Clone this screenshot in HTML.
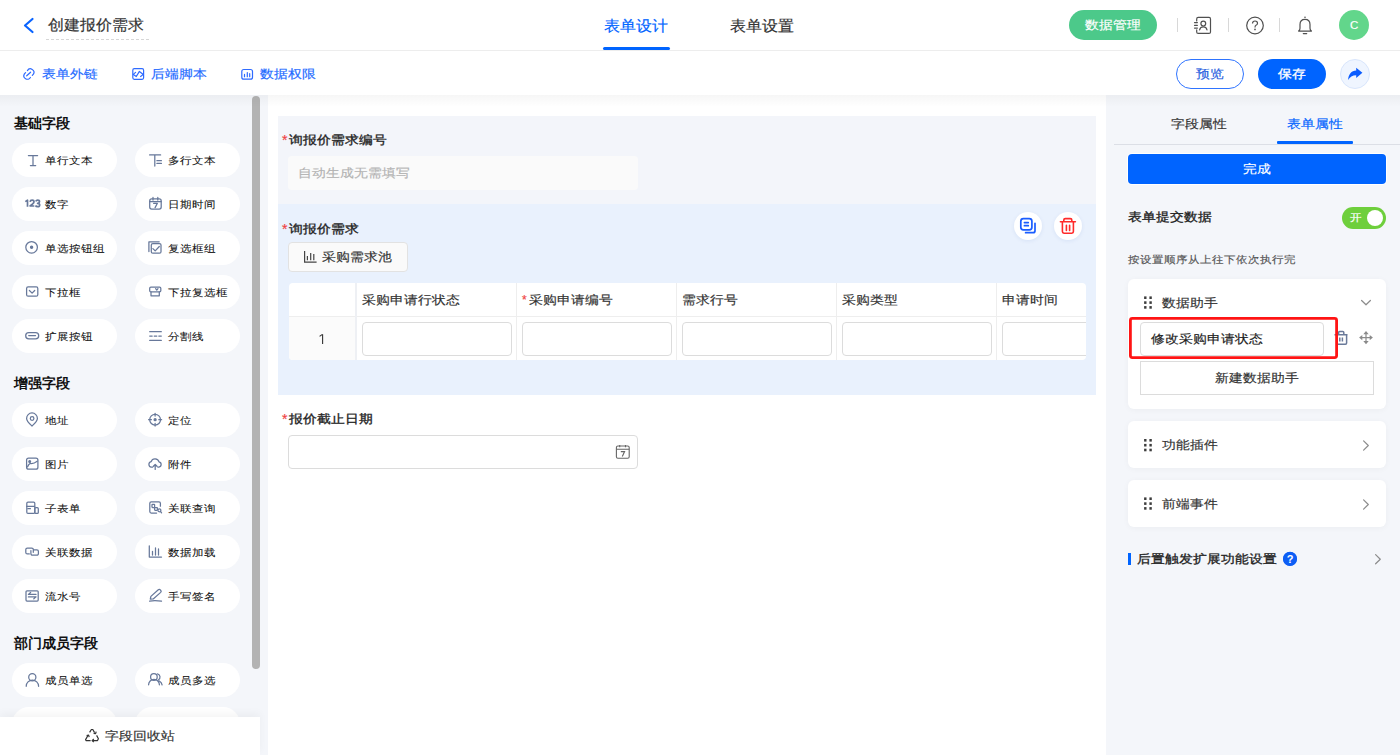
<!DOCTYPE html>
<html><head><meta charset="utf-8">
<style>
*{box-sizing:border-box;margin:0;padding:0}
html,body{width:1400px;height:755px;overflow:hidden;background:#fff;font-family:"Liberation Sans",sans-serif;color:#333}
.a{position:absolute}
.t{position:absolute;white-space:nowrap;line-height:16px;transform:scaleY(.87)}
.n{transform:none}
.t:not(.b){-webkit-text-stroke:0.18px currentColor}
.l{transform:scaleY(.94)}
svg{position:absolute;overflow:visible}
/* header */
#hdr{position:absolute;left:0;top:0;width:1400px;height:51px;border-bottom:1px solid #ededed;background:#fff}
#tb{position:absolute;left:0;top:51px;width:1400px;height:44px;background:#fff}
/* left panel */
#lp{position:absolute;left:0;top:95px;width:268px;height:660px;background:#f4f6fa;overflow:hidden}
.sec{position:absolute;left:14px;font-size:14px;font-weight:bold;color:#111;line-height:16px}
.pill{position:absolute;width:105px;height:34px;border-radius:17px;background:#fff}
.pill .t{font-size:12px;color:#111;left:33px;top:10px;-webkit-text-stroke:0.08px currentColor}
.pill svg{left:12px;top:10px}
#scroll{position:absolute;left:252px;top:96px;width:8px;height:573px;border-radius:4px;background:#b3b3b3}
#bin{position:absolute;left:0;top:717px;width:260px;height:38px;background:#fff;box-shadow:0 -4px 8px rgba(0,0,0,0.04)}
/* canvas */
#cv{position:absolute;left:268px;top:95px;width:838px;height:660px;background:#fff}
/* right panel */
#rp{position:absolute;left:1106px;top:95px;width:294px;height:660px;background:#f4f6fa}
.card{position:absolute;left:1128px;width:258px;background:#fff;border-radius:6px;box-shadow:0 1px 6px rgba(0,0,0,0.04)}
.blue{color:#0064ff}
.b{font-weight:normal !important;-webkit-text-stroke:0.35px currentColor}
</style></head>
<body>
<!-- HEADER -->
<div id="hdr"></div>
<svg style="left:0;top:0" width="1" height="1"><path d="M32.5 19 L25 25.5 L32.5 32" fill="none" stroke="#0a64ff" stroke-width="2.2" stroke-linecap="round" stroke-linejoin="round"/></svg>
<div class="t l" style="left:48px;top:17px;font-size:16px;color:#333">创建报价需求</div>
<div class="a" style="left:46px;top:39px;width:104px;height:1px;background-image:linear-gradient(90deg,#d6d6d6 60%,transparent 60%);background-size:5px 1px"></div>

<div class="t l blue" style="left:604px;top:18px;font-size:16px">表单设计</div>
<div class="a" style="left:603px;top:47px;width:67px;height:3px;border-radius:2px;background:#0064ff"></div>
<div class="t l" style="left:730px;top:18px;font-size:16px;color:#333">表单设置</div>

<div class="a" style="left:1069px;top:10px;width:88px;height:30px;border-radius:15px;background:#4cc98a"></div>
<div class="t" style="left:1085px;top:17px;font-size:14px;color:#fff">数据管理</div>
<div class="a" style="left:1177px;top:18px;width:1px;height:14px;background:#d8d8d8"></div>
<div class="a" style="left:1228px;top:18px;width:1px;height:14px;background:#d8d8d8"></div>
<div class="a" style="left:1279px;top:18px;width:1px;height:14px;background:#d8d8d8"></div>
<!-- contacts icon -->
<svg style="left:0;top:0" width="1" height="1"><g fill="none" stroke="#505050" stroke-width="1.2" stroke-linecap="round">
<path d="M1196.7 21V18.9A1.5 1.5 0 0 1 1198.2 17.4H1209A1.5 1.5 0 0 1 1210.5 18.9V31.9A1.5 1.5 0 0 1 1209 33.4H1198.2A1.5 1.5 0 0 1 1196.7 31.9V29.9"/>
<path d="M1194.5 22.6H1197.4M1194.5 25.3H1197.4M1194.5 28.1H1197.4"/>
<circle cx="1203.3" cy="23.6" r="2.4"/><path d="M1199.6 29.8A3.8 3.8 0 0 1 1207 29.8"/></g></svg>
<!-- help icon -->
<svg style="left:0;top:0" width="1" height="1"><circle cx="1255" cy="25.5" r="8.3" fill="none" stroke="#505050" stroke-width="1.2"/>
<path d="M1252.5 23.4Q1252.6 21 1255 21Q1257.5 21 1257.5 23.2Q1257.5 24.6 1256 25.3Q1255 25.8 1255 27.4" fill="none" stroke="#505050" stroke-width="1.2"/><circle cx="1255" cy="29.4" r="0.85" fill="#505050"/></svg>
<!-- bell -->
<svg style="left:0;top:0" width="1" height="1"><g fill="none" stroke="#505050" stroke-width="1.2" stroke-linejoin="round">
<path d="M1298.6 31.1Q1300 30.2 1300 28.3V24.6Q1300 19.4 1305 19.4Q1310 19.4 1310 24.6V28.3Q1310 30.2 1311.4 31.1Z"/><path d="M1303.3 33.6H1306.7" stroke-linecap="round"/></g><circle cx="1305" cy="17.3" r="0.8" fill="#505050"/></svg>
<div class="a" style="left:1339px;top:10px;width:30px;height:30px;border-radius:50%;background:#62d68b"></div>
<div class="t n" style="left:1350px;top:17px;font-size:11.5px;color:#fff">C</div>

<!-- TOOLBAR -->
<div id="tb"></div>
<svg style="left:0;top:0" width="1" height="1"><g fill="none" stroke="#2f6bff" stroke-width="1.2" stroke-linecap="round">
<path d="M27.4 70.6A3.3 3.3 0 0 1 33.4 74.2L32.3 75.4M25.6 72.6L24.4 73.9A3.3 3.3 0 0 0 30.4 77.5M26.7 75.8L30.6 72.2"/></g></svg>
<div class="t blue" style="left:42px;top:66px;font-size:14px;color:#1e6bff">表单外链</div>
<svg style="left:0;top:0" width="1" height="1"><g fill="none" stroke="#2f6bff" stroke-width="1.2" stroke-linejoin="round" stroke-linecap="round">
<rect x="132.8" y="68.7" width="10.8" height="10.6" rx="1.5"/><path d="M135.6 72.4L133.3 74.4L136.3 76.5L139.4 71.4L143.3 74.4L140.6 76.5"/></g></svg>
<div class="t blue" style="left:151px;top:66px;font-size:14px;color:#1e6bff">后端脚本</div>
<svg style="left:0;top:0" width="1" height="1"><g fill="none" stroke="#2f6bff" stroke-width="1.2" stroke-linecap="round">
<rect x="241.8" y="69.5" width="10.7" height="9.7" rx="2"/><path d="M244.5 74.4V76.7M247.3 72.5V76.7M249.7 73.7V76.7"/></g></svg>
<div class="t blue" style="left:260px;top:66px;font-size:14px;color:#1e6bff">数据权限</div>

<div class="a" style="left:1176px;top:59px;width:68px;height:30px;border-radius:15px;border:1px solid #2f74ff;background:#fff"></div>
<div class="t" style="left:1196px;top:66px;font-size:14px;color:#2a5fe0">预览</div>
<div class="a" style="left:1258px;top:59px;width:68px;height:30px;border-radius:15px;background:#0064ff"></div>
<div class="t b" style="left:1278px;top:66px;font-size:14px;color:#fff">保存</div>
<div class="a" style="left:1340px;top:59px;width:30px;height:30px;border-radius:50%;background:#eff5ff;border:1px solid #d9e6fc"></div>
<svg style="left:0;top:0" width="1" height="1"><path d="M1348.2 80C1348.2 74.5 1351.5 70.4 1356.2 70.4V67.8L1362.4 72.8L1356.2 77.9V75.2C1352.5 75.2 1349.8 76.8 1348.2 80Z" fill="#0a5cff"/></svg>

<!-- LEFT PANEL -->
<div id="lp"></div>
<div class="sec" style="top:115px">基础字段</div>
<div class="sec" style="top:375px">增强字段</div>
<div class="sec" style="top:635px">部门成员字段</div>
<div class="pill" style="left:12px;top:143px"><div class="t">单行文本</div></div>
<div class="pill" style="left:135px;top:143px"><div class="t">多行文本</div></div>
<div class="pill" style="left:12px;top:187px"><div class="t">数字</div></div>
<div class="pill" style="left:135px;top:187px"><div class="t">日期时间</div></div>
<div class="pill" style="left:12px;top:231px"><div class="t">单选按钮组</div></div>
<div class="pill" style="left:135px;top:231px"><div class="t">复选框组</div></div>
<div class="pill" style="left:12px;top:275px"><div class="t">下拉框</div></div>
<div class="pill" style="left:135px;top:275px"><div class="t">下拉复选框</div></div>
<div class="pill" style="left:12px;top:319px"><div class="t">扩展按钮</div></div>
<div class="pill" style="left:135px;top:319px"><div class="t">分割线</div></div>
<div class="pill" style="left:12px;top:403px"><div class="t">地址</div></div>
<div class="pill" style="left:135px;top:403px"><div class="t">定位</div></div>
<div class="pill" style="left:12px;top:447px"><div class="t">图片</div></div>
<div class="pill" style="left:135px;top:447px"><div class="t">附件</div></div>
<div class="pill" style="left:12px;top:491px"><div class="t">子表单</div></div>
<div class="pill" style="left:135px;top:491px"><div class="t">关联查询</div></div>
<div class="pill" style="left:12px;top:535px"><div class="t">关联数据</div></div>
<div class="pill" style="left:135px;top:535px"><div class="t">数据加载</div></div>
<div class="pill" style="left:12px;top:579px"><div class="t">流水号</div></div>
<div class="pill" style="left:135px;top:579px"><div class="t">手写签名</div></div>
<div class="pill" style="left:12px;top:663px"><div class="t">成员单选</div></div>
<div class="pill" style="left:135px;top:663px"><div class="t">成员多选</div></div>
<div class="pill" style="left:12px;top:707px"><div class="t"></div></div>
<div class="pill" style="left:135px;top:707px"><div class="t"></div></div>
<div id="bin"></div>
<div class="t" style="left:105px;top:728px;font-size:14px;color:#333">字段回收站</div>
<div id="scroll"></div>

<!-- CANVAS -->
<div id="cv"></div>
<div class="a" style="left:278px;top:116px;width:818px;height:88px;background:#f3f5fa"></div>
<div class="t n" style="left:282px;top:132px;font-size:14px;color:#f04444">*</div>
<div class="t b" style="left:289px;top:132px;font-size:14px;font-weight:bold;color:#222">询报价需求编号</div>
<div class="a" style="left:288px;top:156px;width:350px;height:34px;border-radius:4px;background:#fafafa"></div>
<div class="t" style="left:298px;top:165px;font-size:14px;color:#b3b3b3">自动生成无需填写</div>

<div class="a" style="left:278px;top:204px;width:818px;height:191px;background:#e9f1fd"></div>
<div class="t n" style="left:282px;top:221px;font-size:14px;color:#f04444">*</div>
<div class="t b" style="left:289px;top:221px;font-size:14px;font-weight:bold;color:#222">询报价需求</div>
<div class="a" style="left:288px;top:242px;width:120px;height:30px;border-radius:4px;background:#fafafa;border:1px solid #e2e2e2"></div>
<div class="t" style="left:322px;top:249px;font-size:14px;color:#333">采购需求池</div>
<div class="a" style="left:1014px;top:212px;width:28px;height:28px;border-radius:50%;background:#fff;box-shadow:0 1px 4px rgba(0,60,160,0.08)"></div>
<div class="a" style="left:1054px;top:212px;width:28px;height:28px;border-radius:50%;background:#fff;box-shadow:0 1px 4px rgba(0,60,160,0.08)"></div>

<div class="a" style="left:289px;top:283px;width:797px;height:77px;background:#fff;overflow:hidden;border-radius:4px">
 <div class="a" style="left:0;top:33px;width:797px;height:1px;background:#eeeeee"></div>
 <div class="a" style="left:0;top:34px;width:66px;height:43px;background:#fbfbfb"></div>
 <div class="a" style="left:66px;top:0;width:2px;height:77px;background:#eef0f4"></div>
 <div class="a" style="left:227px;top:0;width:1px;height:77px;background:#eeeeee"></div>
 <div class="a" style="left:387px;top:0;width:1px;height:77px;background:#eeeeee"></div>
 <div class="a" style="left:547px;top:0;width:1px;height:77px;background:#eeeeee"></div>
 <div class="a" style="left:707px;top:0;width:1px;height:77px;background:#eeeeee"></div>
 <div class="a" style="left:73px;top:39px;width:150px;height:34px;border-radius:4px;border:1px solid #dcdcdc"></div>
 <div class="a" style="left:233px;top:39px;width:150px;height:34px;border-radius:4px;border:1px solid #dcdcdc"></div>
 <div class="a" style="left:393px;top:39px;width:150px;height:34px;border-radius:4px;border:1px solid #dcdcdc"></div>
 <div class="a" style="left:553px;top:39px;width:150px;height:34px;border-radius:4px;border:1px solid #dcdcdc"></div>
 <div class="a" style="left:713px;top:39px;width:150px;height:34px;border-radius:4px;border:1px solid #dcdcdc"></div>
 <div class="t" style="left:73px;top:9px;font-size:14px;color:#333">采购申请行状态</div>
 <div class="t n" style="left:233px;top:9px;font-size:12px;color:#f04444">*</div>
 <div class="t" style="left:240px;top:9px;font-size:14px;color:#333">采购申请编号</div>
 <div class="t" style="left:393px;top:9px;font-size:14px;color:#333">需求行号</div>
 <div class="t" style="left:553px;top:9px;font-size:14px;color:#333">采购类型</div>
 <div class="t" style="left:713px;top:9px;font-size:14px;color:#333">申请时间</div>
</div>

<div class="t n" style="left:282px;top:411px;font-size:14px;color:#f04444">*</div>
<div class="t b" style="left:289px;top:411px;font-size:14px;font-weight:bold;color:#222">报价截止日期</div>
<div class="a" style="left:288px;top:435px;width:350px;height:34px;border-radius:4px;border:1px solid #dcdcdc;background:#fff"></div>

<!-- RIGHT PANEL -->
<div id="rp"></div>
<div class="a" style="left:0;top:95px;width:1400px;height:12px;background:linear-gradient(rgba(0,0,0,0.035),rgba(0,0,0,0))"></div>
<div class="t" style="left:1171px;top:116px;font-size:14px;color:#333">字段属性</div>
<div class="t" style="left:1287px;top:116px;font-size:14px;color:#0064ff">表单属性</div>
<div class="a" style="left:1114px;top:144px;width:286px;height:1px;background:#dcdfe6"></div>
<div class="a" style="left:1277px;top:141px;width:76px;height:3px;border-radius:1px;background:#0064ff"></div>
<div class="a" style="left:1128px;top:154px;width:258px;height:30px;border-radius:4px;background:#0064ff;box-shadow:0 0 0 1px #fff"></div>
<div class="t" style="left:1243px;top:161px;font-size:14px;color:#fff">完成</div>
<div class="t b" style="left:1128px;top:209px;font-size:14px;font-weight:bold;color:#222">表单提交数据</div>
<div class="a" style="left:1342px;top:207px;width:44px;height:22px;border-radius:11px;background:#6ecf3c"></div>
<div class="a" style="left:1367px;top:210px;width:16px;height:16px;border-radius:50%;background:#fff"></div>
<div class="t" style="left:1350px;top:210px;font-size:12px;color:#fff">开</div>
<div class="t" style="left:1128px;top:252px;font-size:12px;color:#555">按设置顺序从上往下依次执行完</div>

<div class="card" style="top:279px;height:130px"></div>
<div class="t" style="left:1162px;top:295px;font-size:14px;color:#333">数据助手</div>
<div class="a" style="left:1140px;top:322px;width:184px;height:34px;border-radius:4px;border:1px solid #dcdcdc;background:#fff"></div>
<div class="t" style="left:1151px;top:331px;font-size:14px;color:#222">修改采购申请状态</div>
<div class="a" style="left:1140px;top:361px;width:234px;height:34px;border:1px solid #dcdcdc;background:#fff"></div>
<div class="t" style="left:1215px;top:370px;font-size:14px;color:#333">新建数据助手</div>

<div class="card" style="top:421px;height:47px"></div>
<div class="t" style="left:1162px;top:437px;font-size:14px;color:#333">功能插件</div>
<div class="card" style="top:480px;height:47px"></div>
<div class="t" style="left:1162px;top:496px;font-size:14px;color:#333">前端事件</div>

<div class="a" style="left:1128px;top:553px;width:3px;height:12px;background:#0064ff"></div>
<div class="t b" style="left:1137px;top:551px;font-size:14px;font-weight:bold;color:#222">后置触发扩展功能设置</div>
<div class="a" style="left:1283px;top:552px;width:14px;height:14px;border-radius:50%;background:#0a5ff5"></div>

<svg style="left:0;top:0;pointer-events:none" width="1400" height="755" viewBox="0 0 1400 755">
<g fill="none" stroke="#67789a" stroke-width="1.25" stroke-linecap="round" stroke-linejoin="round">
<path d="M28.4 155.6H37.6M33 155.6V165.5M30.4 165.6H35.7"/>
<path d="M149.6 154.9H160.6M154.8 154.9V166M156.9 160.7H161.4M156.9 163.4H161.4"/>
<rect x="149.7" y="198.9" width="11.5" height="10.1" rx="2"/><path d="M149.7 201.6H161.2M153 197.4V200M157.8 197.4V200M153.6 203.3H157.4L155.1 207.6"/>
<circle cx="31.6" cy="247.3" r="5.8"/><circle cx="31.6" cy="247.3" r="1.1" fill="#67789a"/>
<path d="M148.9 251.5V241.8H159.2"/><rect x="151.3" y="243.6" width="9.7" height="9.6" rx="1.5"/><path d="M152.9 248.6L155.2 250.9L159.3 246.5"/>
<rect x="26.6" y="286.9" width="11.2" height="9.3" rx="1.5"/><path d="M29.4 290.5L32.1 293.1L34.7 290.5"/>
<rect x="149.7" y="287" width="11.1" height="4.9" rx="1.2"/><path d="M151 291.9V295.8H159.3V291.9M155.6 288.6L156.8 290L158 288.6"/>
<rect x="25.7" y="332.6" width="13" height="6.2" rx="3.1"/><path d="M28.7 335.6H35.5"/>
<path d="M149.7 331.7H161.3M149.7 336H152.2M154.2 336H156.8M158.8 336H161.3M149.7 340.4H161.3"/>
<path d="M32 426C29 423.2 26.6 421 26.6 418.4A5.4 5.4 0 0 1 37.4 418.4C37.4 421 35 423.2 32 426Z"/><circle cx="32.1" cy="418.5" r="1.8"/>
<circle cx="155.1" cy="419.7" r="5.4"/><circle cx="155.1" cy="419.7" r="1" fill="#67789a"/><path d="M155.1 413.3V416.1M155.1 423.3V426.1M148.6 419.7H151.4M158.8 419.7H161.6"/>
<rect x="26.6" y="458" width="11.3" height="11.2" rx="2"/><circle cx="29.7" cy="461.4" r="0.9" fill="#67789a"/><path d="M27.6 466.8Q29 463.4 31 463.5Q34 463.7 37.2 461.2"/>
<path d="M152.6 467.2H151.3A2.8 2.8 0 0 1 151.1 461.7A4.1 4.1 0 0 1 159 461.9A2.7 2.7 0 0 1 158.9 467.2H157.9M155.2 469.4V464.6M153.4 466.3L155.2 464.5L157 466.3"/>
<rect x="26.8" y="502" width="8" height="11.4" rx="1.2"/><path d="M26.8 506.4H34.6M27.8 508.7H30.4"/><rect x="34.8" y="507.7" width="3.5" height="5.7" rx="1"/>
<path d="M160.4 506.2V503.3A1.5 1.5 0 0 0 158.9 501.8H151.3A1.5 1.5 0 0 0 149.8 503.3V511.6A1.5 1.5 0 0 0 151.3 513.1H156.6"/><rect x="152" y="504.3" width="2.6" height="3.3" rx="0.5"/><rect x="154.6" y="507.5" width="2.8" height="2.8" rx="0.5"/><circle cx="159.4" cy="510.3" r="1.5"/><path d="M160.5 511.5L161.6 512.8"/>
<path d="M29.3 553.9H27.3A1.5 1.5 0 0 1 25.8 552.4V549.6A1.5 1.5 0 0 1 27.3 548.1H31.8A1.5 1.5 0 0 1 33.3 549.6V552.3M33.8 549.8H36.9A1.5 1.5 0 0 1 38.4 551.3V553.7A1.5 1.5 0 0 1 36.9 555.2H32.4A1.5 1.5 0 0 1 30.9 553.7V550.6"/>
<path d="M149.3 545.8V557H161.5M152.5 551.3V555M155.5 547.9V555M158.5 548.9V555"/>
<rect x="26" y="590.8" width="12.2" height="10.2" rx="1"/><path d="M28.4 594.4H36M28.4 594.4L30.6 592.5M28.4 596.9H36M36 596.9L33.8 598.8"/>
<path d="M150.3 599.1L150.9 596.4L158.3 589.8A1.4 1.4 0 0 1 160.3 589.9L160.8 590.5A1.4 1.4 0 0 1 160.7 592.4L153.2 599Z"/><path d="M149.6 601.1Q155 600.2 161.5 601.2"/>
<circle cx="32.3" cy="677.3" r="3.6"/><path d="M26.2 686.3A6.2 6.2 0 0 1 38.6 686.3"/>
<circle cx="153.9" cy="677" r="3.3"/><path d="M148.6 684.8A5.4 5.4 0 0 1 159.4 684.8M157.5 673.9A3.3 3.3 0 0 1 158.3 680M159.3 681A5.4 5.4 0 0 1 162.1 684.8"/>
</g>
<path d="M25.3 201.6L27.5 200.2V206.7M30.1 201.9Q30.3 200.2 32.1 200.2Q34 200.2 34 201.8Q34 202.8 32.7 203.8L30.1 206H34.3M35.7 201.3Q36.3 200.2 37.7 200.2Q39.5 200.2 39.5 201.7Q39.5 203.1 37.6 203.3Q39.7 203.4 39.7 205Q39.7 206.7 37.7 206.7Q36.1 206.7 35.5 205.5" fill="none" stroke="#67789a" stroke-width="1.7" stroke-linejoin="round"/>
<!-- recycle -->
<g fill="none" stroke="#333" stroke-width="1.2" stroke-linejoin="round">
<path d="M89.6 732.4L91.4 729.5H92.8L94.6 732.6"/><path d="M93.6 733.4L95.6 733.6L96.2 731.6" />
<path d="M96.6 735.4L98.4 738.8L97.5 740.6H92.6"/><path d="M93.8 739L92.1 740.6L93.8 742"/>
<path d="M90.6 740.6H86.2L85.6 739.6L87.8 735.8"/><path d="M86.6 735.6L88.6 735.1L89.2 737.1"/>
</g>
<!-- copy / delete -->
<g fill="none" stroke="#1a5dff" stroke-width="1.7" stroke-linecap="round">
<rect x="1020.8" y="218.6" width="11.1" height="11.2" rx="2.6"/><path d="M1024.4 222.6H1028.3M1024.4 225.7H1028.3M1025.6 232.7H1033A2 2 0 0 0 1035 230.7V223.3"/></g>
<g fill="none" stroke="#ff2a2a" stroke-width="1.6" stroke-linecap="round">
<path d="M1060.4 221.7H1075.4M1063.8 221.4V220.1A1.5 1.5 0 0 1 1065.3 218.6H1070.3A1.5 1.5 0 0 1 1071.8 220.1V221.4M1062.4 221.9V231.6A1.6 1.6 0 0 0 1064 233.2H1071.8A1.6 1.6 0 0 0 1073.4 231.6V221.9M1066.4 225.2V230.4M1069.6 225.2V230.4"/></g>
<g fill="none" stroke="#444" stroke-width="1.2">
<path d="M304.6 251V262.2H316.6M307.4 256V260.3M310.7 253V260.3M313.8 254V260.3"/></g>
<g fill="none" stroke="#666" stroke-width="1.1">
<rect x="616.4" y="446" width="12.8" height="12.3" rx="1.5"/><path d="M616.4 449.2H629.2M619.7 444.9V447.2M625.5 444.9V447.2M620.8 451.6H624.6L622.3 456.6"/></g>
<!-- right panel -->
<g fill="#3d3d3d">
<rect x="1144.1" y="296.4" width="2.4" height="2.6"/><rect x="1149.4" y="296.4" width="2.4" height="2.6"/><rect x="1144.1" y="301.3" width="2.4" height="2.6"/><rect x="1149.4" y="301.3" width="2.4" height="2.6"/><rect x="1144.1" y="306.1" width="2.4" height="2.6"/><rect x="1149.4" y="306.1" width="2.4" height="2.6"/>
<rect x="1144.1" y="439" width="2.4" height="2.6"/><rect x="1149.4" y="439" width="2.4" height="2.6"/><rect x="1144.1" y="443.9" width="2.4" height="2.6"/><rect x="1149.4" y="443.9" width="2.4" height="2.6"/><rect x="1144.1" y="448.7" width="2.4" height="2.6"/><rect x="1149.4" y="448.7" width="2.4" height="2.6"/>
<rect x="1144.1" y="497.4" width="2.4" height="2.6"/><rect x="1149.4" y="497.4" width="2.4" height="2.6"/><rect x="1144.1" y="502.3" width="2.4" height="2.6"/><rect x="1149.4" y="502.3" width="2.4" height="2.6"/><rect x="1144.1" y="507.1" width="2.4" height="2.6"/><rect x="1149.4" y="507.1" width="2.4" height="2.6"/>
</g>
<g fill="none" stroke="#8c8c8c" stroke-width="1.2" stroke-linecap="round" stroke-linejoin="round">
<path d="M1361.6 300.5L1366 304.8L1370.4 300.5"/>
<path d="M1363.6 440.8L1368.3 445.5L1363.6 450.2"/>
<path d="M1363.6 499.8L1368.3 504.5L1363.6 509.2"/>
<path d="M1375.6 554.6L1380.3 559.2L1375.6 563.8"/>
</g>
<g fill="none" stroke="#6a7a9a" stroke-width="1.5">
<path d="M1334.5 334.7H1347.5M1338.6 334.5V332.6A1 1 0 0 1 1339.6 331.6H1342.8A1 1 0 0 1 1343.8 332.6V334.5M1336.8 334.9V343A1.2 1.2 0 0 0 1338 344.2H1345.4A1.2 1.2 0 0 0 1346.6 343V334.9M1339.8 337.4V341.4M1342.4 337.4V341.4"/></g>
<g fill="#8a8a8a"><path d="M1365.4 333.5H1366.6V341.7H1365.4ZM1361.5 337H1370.5V338.2H1361.5Z"/>
<path d="M1363.3 334.3L1366 331L1368.7 334.3ZM1363.3 340.9L1366 344.2L1368.7 340.9ZM1362.3 334.9L1359.1 337.6L1362.3 340.3ZM1369.7 334.9L1372.9 337.6L1369.7 340.3Z"/></g>
<path d="M322.6 334.3V343.9M322.4 334.4L319.6 336.4" fill="none" stroke="#333" stroke-width="1.1"/>
<rect x="1130.4" y="318.4" width="206.2" height="39.2" rx="2" fill="none" stroke="#ff1414" stroke-width="2.8"/>
<circle cx="1290" cy="558.8" r="7" fill="#0d5ef5"/>
<text x="1290" y="562.9" text-anchor="middle" font-family="Liberation Sans" font-size="11" font-weight="bold" fill="#fff">?</text>
</svg>
</body></html>
